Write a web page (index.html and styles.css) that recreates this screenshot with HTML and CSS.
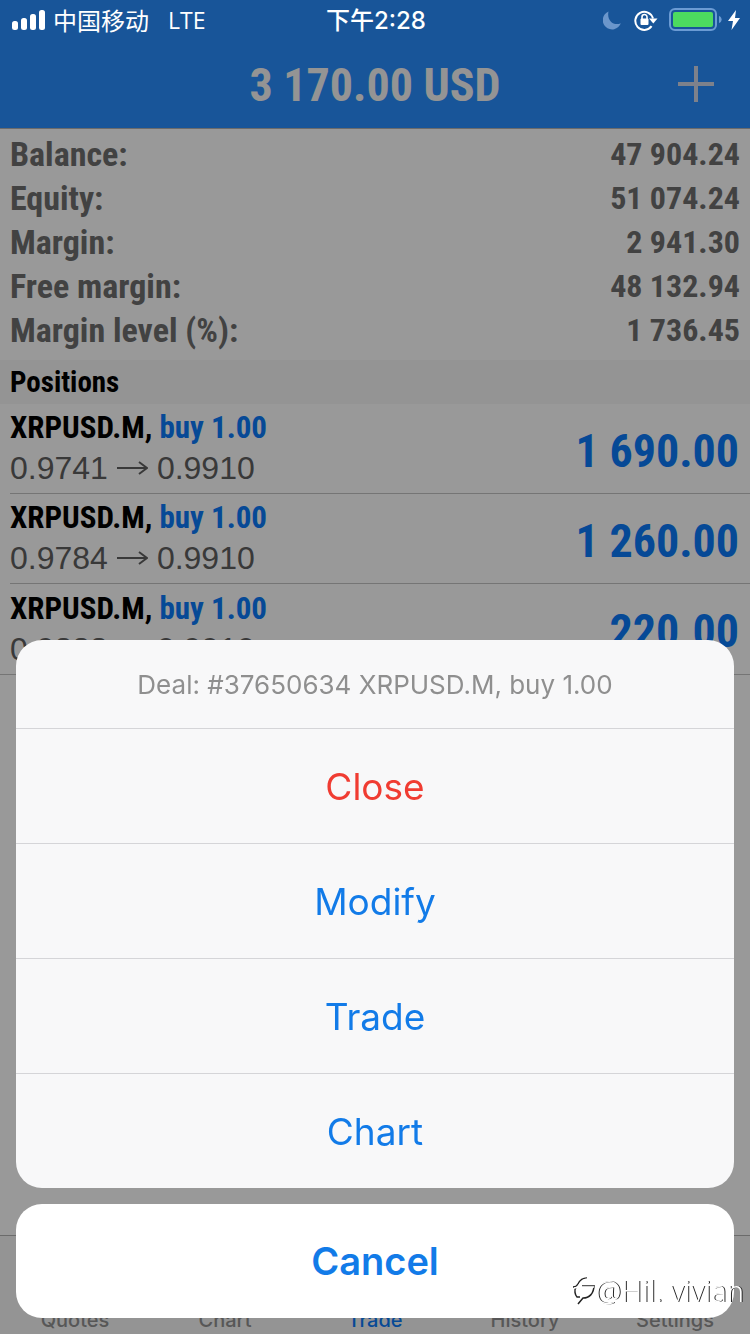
FILE: index.html
```html
<!DOCTYPE html>
<html lang="en">
<head>
<meta charset="utf-8">
<meta name="viewport" content="width=device-width, initial-scale=1">
<title>Trade</title>
<link rel="stylesheet" href="styles.css">
</head>
<body>
<div class="app">
  <div class="status">
    <div class="status-left">
      <svg class="signal" viewBox="0 0 34 20" width="34" height="20" fill="currentColor" aria-hidden="true"><rect x="0" y="11" width="6" height="9" rx="2.5"/><rect x="9" y="8" width="6" height="12" rx="2.5"/><rect x="18" y="4" width="6" height="16" rx="2.5"/><rect x="27" y="0" width="6" height="20" rx="2.5"/></svg>
      <span class="carrier">中国移动</span>
      <span class="network">LTE</span>
    </div>
    <div class="status-time">下午2:28</div>
    <div class="status-right">
      <svg viewBox="0 0 18 20" width="18" height="20" aria-hidden="true"><path d="M5.5 1.5A9.3 9.3 0 1 0 17.8 13.2C11 16.5 3.5 10.5 5.5 1.5Z" fill="#6b96cb"/></svg>
      <svg class="lock" viewBox="0 0 24 22" width="24" height="22" aria-hidden="true"><path d="M17.6 17.2A9 9 0 1 1 19 9.5" fill="none" stroke="#fff" stroke-width="2"/><path d="M15 9.5H23.5L19.3 14.5Z" fill="#fff"/><rect x="6.5" y="9.5" width="8" height="6.5" rx="1" fill="#fff"/><path d="M8 10V8a2.5 2.5 0 0 1 5 0v2" fill="none" stroke="#fff" stroke-width="1.6"/></svg>
      <svg class="battery" viewBox="0 0 53 24" width="53" height="24" aria-hidden="true"><rect x="1" y="1" width="46" height="21" rx="5" fill="none" stroke="#6b9bd4" stroke-width="2"/><rect x="4" y="4" width="40" height="15" rx="2" fill="#4cdb5f"/><path d="M50 8C53.5 9 53.5 14 50 15Z" fill="#6b9bd4"/></svg>
      <svg class="bolt" viewBox="0 0 12 20" width="12" height="20" aria-hidden="true"><path d="M8 0L0 11H5L3.5 20L12 8H7Z" fill="#fff"/></svg>
    </div>
  </div>
  <header class="nav">
    <h1>3 170.00 USD</h1>
    <button class="add" type="button" aria-label="New order"><svg viewBox="0 0 36 36" width="36" height="36" aria-hidden="true"><path d="M18 0V36M0 18H36" stroke="currentColor" stroke-width="4"/></svg></button>
  </header>
  <main>
    <dl class="account">
      <div><dt>Balance:</dt><dd>47 904.24</dd></div>
      <div><dt>Equity:</dt><dd>51 074.24</dd></div>
      <div><dt>Margin:</dt><dd>2 941.30</dd></div>
      <div><dt>Free margin:</dt><dd>48 132.94</dd></div>
      <div><dt>Margin level (%):</dt><dd>1 736.45</dd></div>
    </dl>
    <h2>Positions</h2>
    <ul class="positions">
      <li><div><p class="deal">XRPUSD.M, <span>buy 1.00</span></p><p class="price">0.9741 <svg viewBox="0 0 31 16" width="31" height="16" role="img" aria-label="to"><path d="M0 8H29M22 2L30 8L22 14" fill="none" stroke="currentColor" stroke-width="2"/></svg> 0.9910</p></div><strong>1 690.00</strong></li>
      <li><div><p class="deal">XRPUSD.M, <span>buy 1.00</span></p><p class="price">0.9784 <svg viewBox="0 0 31 16" width="31" height="16" role="img" aria-label="to"><path d="M0 8H29M22 2L30 8L22 14" fill="none" stroke="currentColor" stroke-width="2"/></svg> 0.9910</p></div><strong>1 260.00</strong></li>
      <li><div><p class="deal">XRPUSD.M, <span>buy 1.00</span></p><p class="price">0.9888 <svg viewBox="0 0 31 16" width="31" height="16" role="img" aria-label="to"><path d="M0 8H29M22 2L30 8L22 14" fill="none" stroke="currentColor" stroke-width="2"/></svg> 0.9910</p></div><strong>220.00</strong></li>
    </ul>
  </main>
  <nav class="tabs">
    <a href="#quotes">Quotes</a>
    <a href="#chart">Chart</a>
    <a href="#trade" class="active">Trade</a>
    <a href="#history">History</a>
    <a href="#settings">Settings</a>
  </nav>
</div>
<div class="backdrop"></div>
<div class="sheet" role="dialog" aria-labelledby="sheet-title">
  <div class="actions">
    <p id="sheet-title">Deal: #37650634 XRPUSD.M, buy 1.00</p>
    <button type="button" class="danger">Close</button>
    <button type="button">Modify</button>
    <button type="button">Trade</button>
    <button type="button">Chart</button>
  </div>
  <button type="button" class="cancel">Cancel</button>
</div>
<div class="watermark">
  <svg viewBox="0 0 24 28" width="24" height="28" aria-hidden="true"><g fill="none" stroke-width="1.5"><path d="M1 10C4 10 5 9 6 7C8 3 11 1 15 1M10 9H21M22 8C22 17 17 21 11 21L6 27M4 10C2 13 3 18 5 20H8" stroke="#222"/><path d="M2 11C5 11 6 10 7 8C9 4 12 2 16 2M10 10H22" stroke="#fff"/></g></svg>
  <span>@Hil. vivian</span>
</div>
</body>
</html>
```
FILE: styles.css
```css
* {
  box-sizing: border-box;
  margin: 0;
  padding: 0;
}

:root {
  --narrow: "Liberation Sans Narrow", "Roboto Condensed", "Liberation Sans", sans-serif;
  --ui: Inter, "Liberation Sans", "Noto Sans CJK SC", sans-serif;
  --blue: #0a7bfa;
}

body {
  font-family: var(--ui);
  background: #fff;
  color: #000;
}

button {
  border: 0;
  background: none;
  font: inherit;
  cursor: pointer;
}

a {
  color: inherit;
  text-decoration: none;
}

.app {
  display: flex;
  flex-direction: column;
  min-height: 100vh;
}

.status {
  position: relative;
  z-index: 2;
  display: grid;
  grid-template-columns: 1fr auto 1fr;
  align-items: center;
  height: 40px;
  padding: 0 10px 0 12px;
  background: #185599;
  color: #fff;
  font-size: 24px;
  line-height: 38px;
}

.status-left,
.status-right {
  display: flex;
  align-items: center;
}

.status-right {
  justify-content: flex-end;
}

.carrier {
  margin-left: 7px;
  font-family: "Noto Sans CJK SC", sans-serif;
}

.network {
  margin-left: 19px;
  font-family: "Open Sans", sans-serif;
  font-size: 23px;
}

.status-time {
  padding-top: 2px;
  font-weight: 500;
}

.lock {
  margin-left: 13px;
}

.battery {
  margin-left: 11px;
}

.bolt {
  margin-left: 6px;
}

.nav {
  display: grid;
  grid-template-columns: 1fr auto 1fr;
  align-items: center;
  height: 89px;
  border-bottom: 1px solid #b2b2b2;
  padding: 0 36px;
  background: #288eff;
  color: #f7f7f7;
}

.nav h1 {
  grid-column: 2;
  padding-top: 2px;
  font: 700 46px/56px var(--narrow);
}

.add {
  justify-self: end;
  height: 36px;
  color: #d0d8e8;
}

.account {
  padding: 3px 10px 8px;
  color: #6e6e6e;
  font: 700 34px/44px var(--narrow);
}

.account div {
  display: flex;
  justify-content: space-between;
}

.account dd {
  font-size: 32px;
}

h2 {
  padding: 1px 10px 0;
  background: #f7f7f7;
  font: 700 29px/43px var(--narrow);
}

.positions {
  list-style: none;
  border-bottom: 1px solid #c4c4c4;
}

.positions li {
  display: flex;
  align-items: center;
  justify-content: space-between;
  height: 90px;
  margin-left: 10px;
  padding: 4px 11px 0 0;
}

.positions li:not(:last-child) {
  border-bottom: 1px solid #c4c4c4;
}

.deal {
  font: 700 31px/38px var(--narrow);
}

.deal span,
.positions strong {
  color: var(--blue);
}

.price {
  display: flex;
  align-items: center;
  gap: 9px;
  padding-bottom: 3px;
  color: #606060;
  font: 32px/42px "Liberation Sans", sans-serif;
}

.positions strong {
  font: 700 46px/56px var(--narrow);
}

.tabs {
  display: grid;
  grid-template-columns: repeat(5, 1fr);
  align-items: end;
  height: 99px;
  margin-top: auto;
  border-top: 1px solid #b2b2b2;
  background: #f7f7f7;
  color: #929292;
  font: 500 20px/28px var(--ui);
  text-align: center;
}

.tabs .active {
  color: var(--blue);
}

.backdrop {
  position: fixed;
  inset: 0;
  z-index: 1;
  background: rgba(0, 0, 0, .4);
}

.sheet {
  position: fixed;
  right: 16px;
  bottom: 16px;
  left: 16px;
  z-index: 3;
  display: grid;
  gap: 16px;
  color: #127be8;
  font-size: 37px;
}

.actions {
  overflow: hidden;
  border-radius: 26px;
  background: #f8f8f9;
}

.actions p {
  padding-top: 2px;
  color: #8f8f8f;
  font-size: 26px;
  line-height: 86px;
  text-align: center;
}

.actions button {
  display: block;
  width: 100%;
  height: 115px;
  border-top: 1px solid #d5d5d8;
  color: inherit;
}

.actions .danger {
  color: #f03c32;
}

.cancel {
  height: 114px;
  border-radius: 26px;
  background: #fff;
  color: inherit;
  font-size: 38px;
  font-weight: 600;
}

.watermark {
  position: fixed;
  right: 6px;
  bottom: 26px;
  z-index: 4;
  display: flex;
  align-items: center;
  color: #fff;
  font: 300 29px/34px "Noto Sans", sans-serif;
  text-shadow: 1px 0 0 #222;
}
```
